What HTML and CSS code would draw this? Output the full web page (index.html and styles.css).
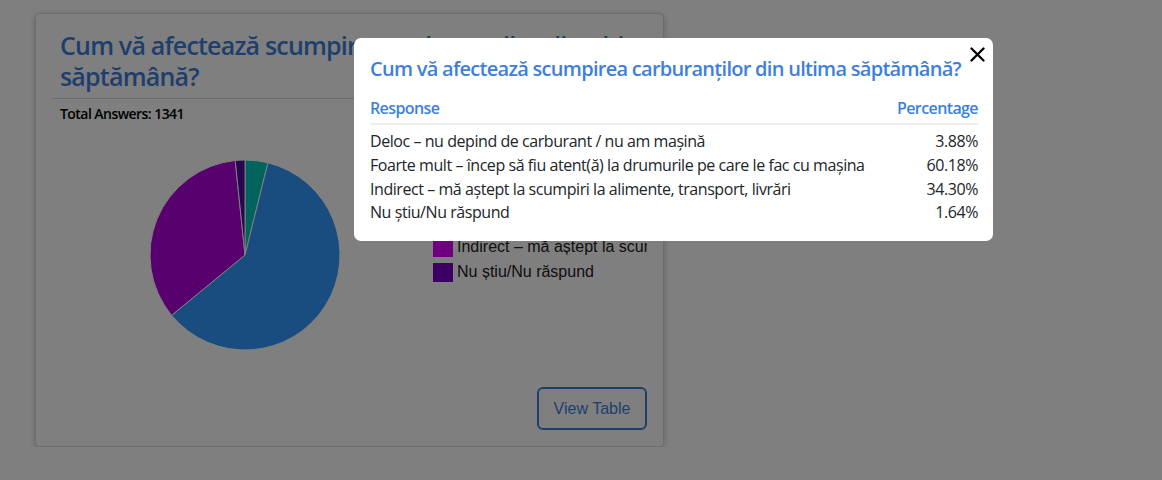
FILE: index.html
```html
<!DOCTYPE html>
<html lang="ro">
<head>
<meta charset="utf-8">
<title>Rezultate sondaj</title>
<link rel="stylesheet" href="styles.css">
</head>
<body>
<main class="page">
  <section class="card">
    <header class="card-head">
      <h2 class="card-title">Cum vă afectează scumpirea carburanților din ultima<br>săptămână?</h2>
    </header>
    <p class="total">Total Answers: 1341</p>
    <div class="chart">
      <svg class="pie" width="190" height="190" viewBox="0 0 190 190">
        <path d="M95 95 L95 0 A95 95 0 0 1 117.93 2.81 Z" fill="#00c8bc" stroke="#fff" stroke-width="1"/>
        <path d="M95 95 L117.93 2.81 A95 95 0 1 1 21.59 155.30 Z" fill="#3298fe" stroke="#fff" stroke-width="1"/>
        <path d="M95 95 L21.59 155.30 A95 95 0 0 1 85.23 0.50 Z" fill="#b000dc" stroke="#fff" stroke-width="1"/>
        <path d="M95 95 L85.23 0.50 A95 95 0 0 1 95 0 Z" fill="#500ca0" stroke="#fff" stroke-width="1"/>
      </svg>
      <ul class="legend">
        <li><span class="swatch sw-teal"></span>Deloc – nu depind de carburant / nu am mașină</li>
        <li><span class="swatch sw-blue"></span>Foarte mult – încep să fiu atent(ă) la drumurile pe care le fac cu mașina</li>
        <li><span class="swatch sw-purple"></span>Indirect – mă aștept la scumpiri la alimente, transport, livrări</li>
        <li><span class="swatch sw-dark"></span>Nu știu/Nu răspund</li>
      </ul>
    </div>
    <button class="btn-table" type="button">View Table</button>
  </section>
</main>

<div class="backdrop">
  <div class="modal" role="dialog" aria-modal="true">
    <button class="close" type="button" aria-label="Close">
      <svg width="15" height="15" viewBox="0 0 15 15"><path d="M1.5 1.5 L13.5 13.5 M13.5 1.5 L1.5 13.5" stroke="#000" stroke-width="2.3" stroke-linecap="round"/></svg>
    </button>
    <h3 class="modal-title">Cum vă afectează scumpirea carburanților din ultima săptămână?</h3>
    <table class="results">
      <thead>
        <tr><th class="col-resp">Response</th><th class="col-pct">Percentage</th></tr>
      </thead>
      <tbody>
        <tr><td>Deloc – nu depind de carburant / nu am mașină</td><td class="col-pct">3.88%</td></tr>
        <tr><td>Foarte mult – încep să fiu atent(ă) la drumurile pe care le fac cu mașina</td><td class="col-pct">60.18%</td></tr>
        <tr><td>Indirect – mă aștept la scumpiri la alimente, transport, livrări</td><td class="col-pct">34.30%</td></tr>
        <tr><td>Nu știu/Nu răspund</td><td class="col-pct">1.64%</td></tr>
      </tbody>
    </table>
  </div>
</div>
</body>
</html>
```

FILE: styles.css
```css
* { box-sizing: border-box; }

html, body {
  margin: 0;
  padding: 0;
  background: #fff;
  font-family: "Open Sans", "Noto Sans", "DejaVu Sans", sans-serif;
  color: #212529;
}

.page {
  padding: 13px 0 0 35px;
}

.card {
  width: 629px;
  height: 434px;
  background: #fff;
  border: 1px solid rgba(0, 0, 0, 0.14);
  border-radius: 5px;
  box-shadow: 0 2px 6px rgba(0, 0, 0, 0.22);
  padding: 16px;
  display: flex;
  flex-direction: column;
}

.card-head {
  border-bottom: 1px solid rgba(0, 0, 0, 0.15);
  padding: 0 8px 6px;
  overflow: hidden;
}

.card-title {
  margin: 0;
  font-size: 25px;
  line-height: 31px;
  font-weight: 600;
  color: #3d7fdc;
  letter-spacing: -0.8px;
  white-space: nowrap;
}

.total {
  margin: 7px 0 0 8px;
  font-size: 14px;
  line-height: 16px;
  font-weight: 600;
  color: #000;
  letter-spacing: -0.55px;
}

.chart {
  flex: 1;
  display: flex;
  align-items: flex-start;
  overflow: hidden;
  min-height: 0;
}

.pie {
  flex: none;
  margin: 38px 0 0 98px;
  display: block;
}

.legend {
  list-style: none;
  margin: 65px 0 0 93px;
  padding: 0;
  display: flex;
  flex-direction: column;
  gap: 5px;
  font-family: "Liberation Sans", Arial, sans-serif;
  font-size: 16px;
  color: #222;
  white-space: nowrap;
}

.legend li {
  display: flex;
  align-items: center;
  height: 20px;
  gap: 4px;
}

.swatch {
  width: 20px;
  height: 19px;
  flex: none;
}
.sw-teal { background: #00c8bc; }
.sw-blue { background: #3298fe; }
.sw-purple { background: #dc00ff; }
.sw-dark { background: #7800c8; }

.btn-table {
  align-self: flex-end;
  width: 110px;
  height: 43px;
  background: #fff;
  border: 2px solid #3d7fdc;
  border-radius: 6px;
  color: #3d7fdc;
  font-family: "Liberation Sans", Arial, sans-serif;
  font-size: 16px;
  cursor: pointer;
}

.backdrop {
  position: fixed;
  inset: 0;
  background: rgba(0, 0, 0, 0.5);
  padding: 38px 0 0 354px;
}

.modal {
  position: relative;
  width: 639px;
  background: #fff;
  border-radius: 7px;
  padding: 17px 15px 16px 16px;
}

.close {
  position: absolute;
  top: 9px;
  right: 8px;
  width: 15px;
  height: 15px;
  padding: 0;
  border: 0;
  background: transparent;
  cursor: pointer;
}
.close svg { display: block; }

.modal-title {
  margin: 0 0 14px;
  padding-right: 12px;
  font-size: 20px;
  line-height: 28px;
  font-weight: 600;
  color: #3d7fdc;
  letter-spacing: -0.72px;
}

.results {
  width: 100%;
  border-collapse: collapse;
  font-size: 16px;
  letter-spacing: -0.44px;
}

.results th {
  font-weight: 600;
  color: #3d7fdc;
  padding: 0 0 4px;
  line-height: 22px;
  border-bottom: 2px solid #eceef0;
  text-align: left;
  letter-spacing: -0.6px;
}

.results th.col-pct { text-align: right; }

.results td {
  padding: 0;
  line-height: 23.8px;
}

.results tbody tr:first-child td { padding-top: 5px; }

.results .col-pct { text-align: right; }
```
